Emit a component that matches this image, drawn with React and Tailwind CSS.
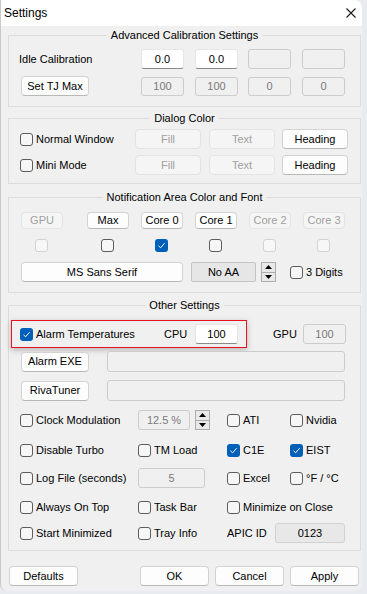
import React from 'react'
import clsx from 'clsx'

const Btn = ({ className, disabled, children }) => (
  <button
    type="button"
    className={clsx(
      'flex items-center justify-center rounded-[4px] border text-[11px] leading-none shrink-0',
      disabled
        ? 'bg-[#f5f5f5] border-[#e3e3e3] text-[#a0a0a0]'
        : 'bg-[#fdfdfd] border-[#d3d3d3] border-b-[#b8b8b8] text-black',
      className
    )}
  >
    {children}
  </button>
)

const Field = ({ className, disabled, children }) => (
  <div
    className={clsx(
      'flex items-center justify-center rounded-[3px] border text-[11px] leading-none shrink-0',
      disabled
        ? 'bg-[#f0f0f0] border-[#cccccc] text-[#7a7a7a]'
        : 'bg-white border-[#e6e6e6] border-b-[#8a8a8a] text-black',
      className
    )}
  >
    {children}
  </div>
)

const Check = ({ checked, disabled }) => {
  if (checked) {
    return (
      <span className="flex items-center justify-center w-[13px] h-[13px] rounded-[3px] bg-[#005fb8] shrink-0">
        <svg width="9" height="9" viewBox="0 0 9 9">
          <path d="M1.5 4.8 L3.6 6.8 L7.6 2.2" fill="none" stroke="white" strokeWidth="1" />
        </svg>
      </span>
    )
  }
  return (
    <span
      className={clsx(
        'block w-[13px] h-[13px] rounded-[3px] border shrink-0',
        disabled ? 'border-[#d2d2d2] bg-[#f7f7f7]' : 'border-[#5c5c5c] bg-[#f6f6f6]'
      )}
    />
  )
}

const CheckLabel = ({ className, checked, children }) => (
  <div className={clsx('flex items-center shrink-0', className)}>
    <Check checked={checked} />
    <span className="ml-[3px] text-[11px] leading-none text-black whitespace-nowrap">{children}</span>
  </div>
)

const Spinner = () => (
  <div className="flex flex-col w-[15px] h-[20px] border border-[#adadad] bg-[#e9e9e9] shrink-0">
    <div className="flex-1 flex items-center justify-center border-b border-[#adadad]">
      <svg width="7" height="4" viewBox="0 0 7 4"><path d="M0 4 L3.5 0 L7 4 Z" fill="#000" /></svg>
    </div>
    <div className="flex-1 flex items-center justify-center">
      <svg width="7" height="4" viewBox="0 0 7 4"><path d="M0 0 L3.5 4 L7 0 Z" fill="#000" /></svg>
    </div>
  </div>
)

const Group = ({ title, className, children }) => (
  <fieldset className={clsx('w-[353px] ml-[7px] border border-[#dcdcdc] shrink-0', className)}>
    <legend className="mx-auto px-[4px] text-[11px] leading-[14px] text-black">{title}</legend>
    {children}
  </fieldset>
)

const Label = ({ className, children }) => (
  <span className={clsx('text-[11px] leading-none text-black whitespace-nowrap shrink-0', className)}>{children}</span>
)

export default function App() {
  return (
    <div className="w-[367px] h-[594px] bg-[#e8ecf1] overflow-hidden font-['Liberation_Sans',Arial,sans-serif]">
      <div className="w-[362px] h-[591px] flex flex-col bg-[#f0f0f0] rounded-tr-[8px] rounded-b-[7px] border-l border-[#c9c9c9] overflow-hidden">
        {/* title bar */}
        <div className="h-[26px] bg-white flex items-center justify-between pl-[3px] pr-[6px] shrink-0">
          <span className="text-[12px] text-black">Settings</span>
          <svg width="10" height="10" viewBox="0 0 10 10">
            <path d="M0.5 0.5 L9.5 9.5 M9.5 0.5 L0.5 9.5" stroke="#1a1a1a" strokeWidth="1.1" />
          </svg>
        </div>

        <Group title="Advanced Calibration Settings" className="mt-[2px] h-[79px]">
          <div className="flex items-center h-[20px] mt-[7px]">
            <Label className="ml-[10px] w-[122px]">Idle Calibration</Label>
            <Field className="w-[43px] h-[20px]">0.0</Field>
            <Field className="w-[43px] h-[20px] ml-[11px]">0.0</Field>
            <Field disabled className="w-[43px] h-[20px] ml-[10px]" />
            <Field disabled className="w-[43px] h-[20px] ml-[11px]" />
          </div>
          <div className="flex items-center h-[20px] mt-[7px]">
            <Btn className="ml-[12px] w-[68px] h-[20px]">Set TJ Max</Btn>
            <Field disabled className="w-[43px] h-[19px] ml-[52px]">100</Field>
            <Field disabled className="w-[43px] h-[19px] ml-[11px]">100</Field>
            <Field disabled className="w-[43px] h-[19px] ml-[10px]">0</Field>
            <Field disabled className="w-[43px] h-[19px] ml-[11px]">0</Field>
          </div>
        </Group>

        <Group title="Dialog Color" className="mt-[4px] h-[73px]">
          <div className="flex items-center h-[20px] mt-[4px]">
            <CheckLabel className="ml-[11px] w-[115px]">Normal Window</CheckLabel>
            <Btn disabled className="w-[66px] h-[20px]">Fill</Btn>
            <Btn disabled className="w-[66px] h-[20px] ml-[8px]">Text</Btn>
            <Btn className="w-[66px] h-[20px] ml-[7px]">Heading</Btn>
          </div>
          <div className="flex items-center h-[20px] mt-[6px]">
            <CheckLabel className="ml-[11px] w-[115px]">Mini Mode</CheckLabel>
            <Btn disabled className="w-[66px] h-[20px]">Fill</Btn>
            <Btn disabled className="w-[66px] h-[20px] ml-[8px]">Text</Btn>
            <Btn className="w-[66px] h-[20px] ml-[7px]">Heading</Btn>
          </div>
        </Group>

        <Group title="Notification Area Color and Font" className="mt-[6px] h-[103px]">
          <div className="flex items-center h-[17px] mt-[8px]">
            <Btn disabled className="ml-[12px] w-[42px] h-[17px]">GPU</Btn>
            <Btn className="ml-[24px] w-[42px] h-[17px]">Max</Btn>
            <Btn className="ml-[12px] w-[42px] h-[17px]">Core 0</Btn>
            <Btn className="ml-[12px] w-[42px] h-[17px]">Core 1</Btn>
            <Btn disabled className="ml-[12px] w-[42px] h-[17px]">Core 2</Btn>
            <Btn disabled className="ml-[12px] w-[42px] h-[17px]">Core 3</Btn>
          </div>
          <div className="flex items-center h-[13px] mt-[10px]">
            <span className="ml-[26px]"><Check disabled /></span>
            <span className="ml-[53px]"><Check /></span>
            <span className="ml-[41px]"><Check checked /></span>
            <span className="ml-[41px]"><Check /></span>
            <span className="ml-[41px]"><Check disabled /></span>
            <span className="ml-[41px]"><Check disabled /></span>
          </div>
          <div className="flex items-center h-[20px] mt-[10px]">
            <Btn className="ml-[12px] w-[162px] h-[20px]">MS Sans Serif</Btn>
            <button
              type="button"
              className="ml-[8px] w-[65px] h-[20px] flex items-center justify-center border border-[#c4c4c4] bg-[#e6e6e6] rounded-[2px] text-[11px] leading-none text-black shrink-0"
            >
              No AA
            </button>
            <span className="ml-[5px]"><Spinner /></span>
            <CheckLabel className="ml-[14px]">3 Digits</CheckLabel>
          </div>
        </Group>

        <Group title="Other Settings" className="mt-[5px] h-[253px]">
          <div className="flex items-center h-[28px] mt-[8px]">
            <div className="ml-[2px] w-[236px] h-[28px] flex items-center border border-[#e81123] shadow-[0_2px_6px_rgba(0,0,0,0.25)] pl-[8px] shrink-0">
              <CheckLabel checked className="w-[144px]">Alarm Temperatures</CheckLabel>
              <Label className="w-[31px]">CPU</Label>
              <Field className="w-[43px] h-[20px]">100</Field>
            </div>
            <Label className="ml-[26px] w-[30px]">GPU</Label>
            <Field disabled className="w-[43px] h-[20px]">100</Field>
          </div>
          <div className="flex items-center h-[21px] mt-[3px]">
            <Btn className="ml-[12px] w-[68px] h-[20px]">Alarm EXE</Btn>
            <Field disabled className="ml-[18px] w-[238px] h-[21px]" />
          </div>
          <div className="flex items-center h-[21px] mt-[8px]">
            <Btn className="ml-[12px] w-[68px] h-[20px]">RivaTuner</Btn>
            <Field disabled className="ml-[18px] w-[238px] h-[21px]" />
          </div>
          <div className="flex items-center h-[20px] mt-[9px]">
            <CheckLabel className="ml-[11px] w-[118px]">Clock Modulation</CheckLabel>
            <div className="flex items-center w-[89px] shrink-0">
              <Field disabled className="w-[52px] h-[20px]">12.5 %</Field>
              <span className="ml-[5px]"><Spinner /></span>
            </div>
            <CheckLabel className="w-[63px]">ATI</CheckLabel>
            <CheckLabel>Nvidia</CheckLabel>
          </div>
          <div className="flex items-center h-[20px] mt-[10px]">
            <CheckLabel className="ml-[11px] w-[118px]">Disable Turbo</CheckLabel>
            <CheckLabel className="w-[89px]">TM Load</CheckLabel>
            <CheckLabel checked className="w-[63px]">C1E</CheckLabel>
            <CheckLabel checked>EIST</CheckLabel>
          </div>
          <div className="flex items-center h-[20px] mt-[8px]">
            <CheckLabel className="ml-[11px] w-[118px]">Log File (seconds)</CheckLabel>
            <div className="w-[89px] shrink-0">
              <Field disabled className="w-[67px] h-[20px]">5</Field>
            </div>
            <CheckLabel className="w-[63px]">Excel</CheckLabel>
            <CheckLabel>°F / °C</CheckLabel>
          </div>
          <div className="flex items-center h-[20px] mt-[9px]">
            <CheckLabel className="ml-[11px] w-[118px]">Always On Top</CheckLabel>
            <CheckLabel className="w-[89px]">Task Bar</CheckLabel>
            <CheckLabel>Minimize on Close</CheckLabel>
          </div>
          <div className="flex items-center h-[20px] mt-[6px]">
            <CheckLabel className="ml-[11px] w-[118px]">Start Minimized</CheckLabel>
            <CheckLabel className="w-[89px]">Tray Info</CheckLabel>
            <Label className="w-[48px]">APIC ID</Label>
            <div className="w-[70px] h-[20px] flex items-center justify-center rounded-[3px] border border-[#d2d2d2] bg-[#e8e8e8] text-[11px] leading-none text-black shrink-0">
              0123
            </div>
          </div>
        </Group>

        <div className="flex items-center h-[20px] mt-[15px] pl-[7px]">
          <Btn className="ml-[1px] w-[69px] h-[20px]">Defaults</Btn>
          <Btn className="ml-[62px] w-[69px] h-[20px] border-[#005fb8] border-b-[#005fb8]">OK</Btn>
          <Btn className="ml-[6px] w-[69px] h-[20px]">Cancel</Btn>
          <Btn className="ml-[6px] w-[69px] h-[20px]">Apply</Btn>
        </div>
      </div>
    </div>
  )
}
